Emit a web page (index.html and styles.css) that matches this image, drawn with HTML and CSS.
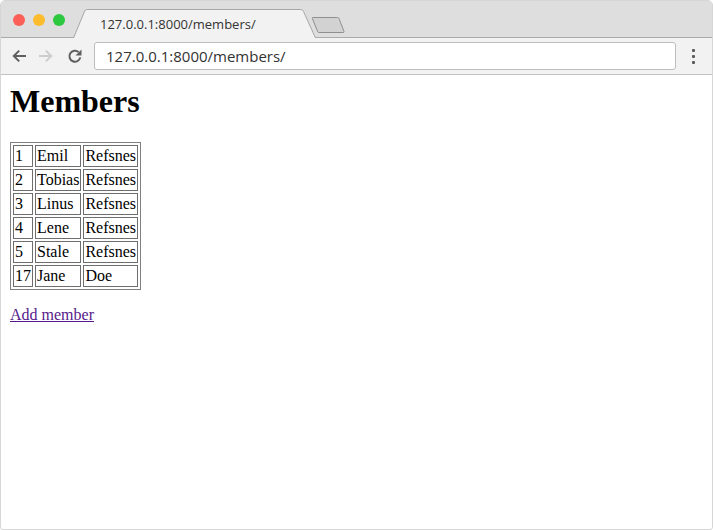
FILE: index.html
```html
<!DOCTYPE html>
<html>
<head>
<meta charset="utf-8">
<title>Members</title>
<link rel="stylesheet" href="styles.css">
</head>
<body>
<div class="window">
  <div class="tabbar">
    <div class="lights">
      <span class="light red"></span>
      <span class="light yellow"></span>
      <span class="light green"></span>
    </div>
    <div class="tab">
      <svg class="tab-shape" width="243" height="29" viewBox="0 0 243 29">
        <path d="M0.5 29 L11.6 2.2 Q12.4 0.5 14.3 0.5 L227.7 0.5 Q229.6 0.5 230.4 2.2 L242.5 29" fill="#f2f2f2" stroke="#a6a6a6" stroke-width="1"/>
      </svg>
      <span class="tab-title">127.0.0.1:8000/members/</span>
    </div>
    <div class="newtab">
      <svg width="36" height="18" viewBox="0 0 36 18">
        <path d="M3 1.5 L27.5 1.5 Q28.6 1.5 29 2.5 L34 15.5 Q34.3 16.5 33.2 16.5 L9 16.5 Q8 16.5 7.6 15.5 L2.4 2.5 Q2 1.5 3 1.5 Z" fill="#d2d2d2" stroke="#8f8f8f" stroke-width="1" stroke-linejoin="round"/>
      </svg>
    </div>
  </div>
  <div class="toolbar">
    <div class="btn btn-back">
      <svg width="16" height="16" viewBox="0 0 16 16"><path d="M15 8H2.8M8.2 2.6L2.8 8l5.4 5.4" fill="none" stroke="#5f5f5f" stroke-width="2"/></svg>
    </div>
    <div class="btn btn-fwd">
      <svg width="16" height="16" viewBox="0 0 16 16"><path d="M1 8h12.2M7.8 2.6L13.2 8l-5.4 5.4" fill="none" stroke="#cdcdcd" stroke-width="2"/></svg>
    </div>
    <div class="btn btn-reload">
      <svg width="16" height="16" viewBox="0 0 16 16"><path d="M13.3 9.4A5.5 5.5 0 1 1 11.6 4.1" fill="none" stroke="#5f5f5f" stroke-width="2"/><path d="M14.5 1.6V7.6H8.5Z" fill="#5f5f5f"/></svg>
    </div>
    <div class="omnibox">127.0.0.1:8000/members/</div>
    <div class="menu">
      <span class="dot"></span><span class="dot"></span><span class="dot"></span>
    </div>
  </div>
  <div class="page">
    <h1 class="title">Members</h1>
    <table class="members">
      <tr><td>1</td><td>Emil</td><td>Refsnes</td></tr>
      <tr><td>2</td><td>Tobias</td><td>Refsnes</td></tr>
      <tr><td>3</td><td>Linus</td><td>Refsnes</td></tr>
      <tr><td>4</td><td>Lene</td><td>Refsnes</td></tr>
      <tr><td>5</td><td>Stale</td><td>Refsnes</td></tr>
      <tr><td>17</td><td>Jane</td><td>Doe</td></tr>
    </table>
    <p class="add"><a class="add-link" href="#">Add member</a></p>
  </div>
</div>
</body>
</html>
```

FILE: styles.css
```css
html, body {
  margin: 0;
  padding: 0;
  background: #ffffff;
}

.window {
  width: 713px;
  height: 530px;
  box-sizing: border-box;
  border: 1px solid #d6d6d6;
  border-radius: 5px 5px 3px 3px;
  overflow: hidden;
  background: #ffffff;
  display: flex;
  flex-direction: column;
}

.tabbar {
  height: 37px;
  box-sizing: border-box;
  background: #dedede;
  border-bottom: 1px solid #ababab;
  display: flex;
  align-items: flex-end;
  flex-shrink: 0;
}

.lights {
  display: flex;
  gap: 8px;
  margin-left: 12px;
  align-self: flex-start;
  margin-top: 13px;
}

.light {
  width: 12px;
  height: 12px;
  border-radius: 50%;
  display: block;
}

.red { background: #fc5f57; }
.yellow { background: #fdbc2e; }
.green { background: #2bc840; }

.tab {
  position: relative;
  width: 243px;
  height: 29px;
  margin-left: 8px;
  margin-bottom: -1px;
  box-sizing: border-box;
  padding: 6px 0 0 27px;
}

.tab-shape {
  position: absolute;
  left: 0;
  top: 0;
  display: block;
}

.tab-title {
  position: relative;
  display: block;
  font-family: "Open Sans", "Noto Sans", sans-serif;
  font-size: 13px;
  line-height: 18px;
  color: #333333;
  white-space: nowrap;
}

.newtab {
  align-self: flex-start;
  margin-top: 15px;
  margin-left: -6px;
  width: 36px;
  height: 18px;
}

.newtab svg { display: block; }

.toolbar {
  height: 37px;
  box-sizing: border-box;
  background: #f2f2f2;
  border-bottom: 1px solid #c2c2c2;
  display: flex;
  align-items: center;
  padding: 0 2px 0 4px;
  flex-shrink: 0;
}

.btn {
  display: flex;
  align-items: center;
  justify-content: center;
  height: 28px;
}

.btn svg { display: block; }

.btn-back { width: 28px; }
.btn-fwd { width: 26px; }
.btn-reload { width: 32px; margin-right: 3px; }

.omnibox {
  flex: 1;
  height: 28px;
  box-sizing: border-box;
  border: 1px solid #bdbdbd;
  border-radius: 3px;
  background: #ffffff;
  padding-left: 11px;
  font-family: "Open Sans", "Noto Sans", sans-serif;
  font-size: 15px;
  line-height: 26px;
  color: #333333;
  white-space: nowrap;
}

.menu {
  width: 34px;
  display: flex;
  flex-direction: column;
  align-items: center;
  gap: 3px;
}

.dot {
  width: 3px;
  height: 3px;
  border-radius: 1px;
  background: #5a5a5a;
  display: block;
}

.page {
  flex: 1;
  padding: 8px 8px 8px 9px;
  font-family: "Liberation Serif", "Times New Roman", serif;
  font-size: 16px;
  color: #000000;
}

.title {
  margin: 0 0 22px 0;
  font-size: 32px;
  line-height: 37px;
  font-weight: bold;
}

.members {
  border-collapse: separate;
  border-spacing: 2px;
  border: 1px solid #808080;
  font-size: 16px;
}

.members td {
  border: 1px solid #6e6e6e;
  padding: 1px;
  line-height: 18px;
  white-space: nowrap;
}

.add {
  margin: 16px 0;
  line-height: 18px;
}

.add-link {
  color: #551a8b;
  text-decoration: underline;
}
```
